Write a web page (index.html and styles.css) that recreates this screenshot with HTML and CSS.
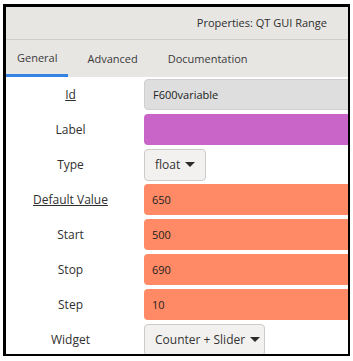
FILE: index.html
```html
<!DOCTYPE html>
<html>
<head>
    <title>Properties: QT GUI Range</title>
    <link rel="stylesheet" href="styles.css">
</head>
<body>
<div class="dialog">
    <div class="header">Properties: QT GUI Range</div>

    <div class="tabs">
        <span class="tab active">General</span>
        <span class="tab">Advanced</span>
        <span class="tab">Documentation</span>
    </div>

    <div class="params">
        <label class="name"><u>Id</u></label>
        <div class="field grey">F600variable</div>

        <label class="name">Label</label>
        <div class="field magenta"></div>

        <label class="name">Type</label>
        <div><button class="dropdown small">float <span class="caret"></span></button></div>

        <label class="name"><u>Default Value</u></label>
        <div class="field orange">650</div>

        <label class="name">Start</label>
        <div class="field orange">500</div>

        <label class="name">Stop</label>
        <div class="field orange">690</div>

        <label class="name">Step</label>
        <div class="field orange">10</div>

        <label class="name">Widget</label>
        <div><button class="dropdown wide">Counter + Slider <span class="caret"></span></button></div>
    </div>
</div>
</body>
</html>
```

FILE: styles.css
```css
body {
    margin: 0;
    background: #ffffff;
    font-family: "Open Sans", "Noto Sans", sans-serif;
    color: #333333;
}

.dialog {
    margin: 4px 0 0 3px;
    width: 342px;
    height: 347px;
    border: 3px solid #000000;
    border-right-width: 2px;
    border-bottom-width: 2px;
    overflow: hidden;
    background: #ffffff;
}

.header {
    height: 32px;
    line-height: 32px;
    background: #e8e6e3;
    border-bottom: 1px solid #cfcdca;
    text-align: right;
    padding-right: 21px;
    font-size: 11px;
    color: #2e2e2e;
}

.tabs {
    display: flex;
    gap: 8px;
    height: 37px;
    background: #e8e6e3;
}

.tab {
    padding: 0 11px;
    line-height: 37px;
    font-size: 11px;
    color: #3a3a3a;
    box-sizing: border-box;
    height: 37px;
}

.tab.active {
    border-bottom: 3px solid #3584e4;
    line-height: 35px;
}

.params {
    display: grid;
    grid-template-columns: 129px 1fr;
    grid-auto-rows: 31px;
    column-gap: 9px;
    row-gap: 4px;
    padding-top: 2px;
    align-items: center;
}

.name {
    text-align: center;
    font-size: 12px;
    color: #303030;
}

.field {
    height: 31px;
    line-height: 31px;
    border-radius: 4px 0 0 4px;
    padding-left: 8px;
    font-size: 11px;
    color: #222222;
    box-sizing: border-box;
    margin-right: -4px;
}

.grey {
    background: #dedede;
    border: 1px solid #cfcfcf;
    line-height: 29px;
}

.magenta {
    background: #c964c8;
}

.orange {
    background: #ff8a65;
}

.dropdown {
    display: flex;
    align-items: center;
    height: 32px;
    white-space: nowrap;
    font-family: "Open Sans", "Noto Sans", sans-serif;
    font-size: 12px;
    color: #333333;
    background: #f2f1f0;
    border: 1px solid #cdcbc9;
    border-radius: 4px;
    padding: 0 0 0 10px;
}

.small {
    width: 62px;
}

.wide {
    width: 121px;
}

.caret {
    display: inline-block;
    width: 0;
    height: 0;
    margin-left: 5px;
    border-left: 5px solid transparent;
    border-right: 5px solid transparent;
    border-top: 5px solid #2b2b2b;
}
```
